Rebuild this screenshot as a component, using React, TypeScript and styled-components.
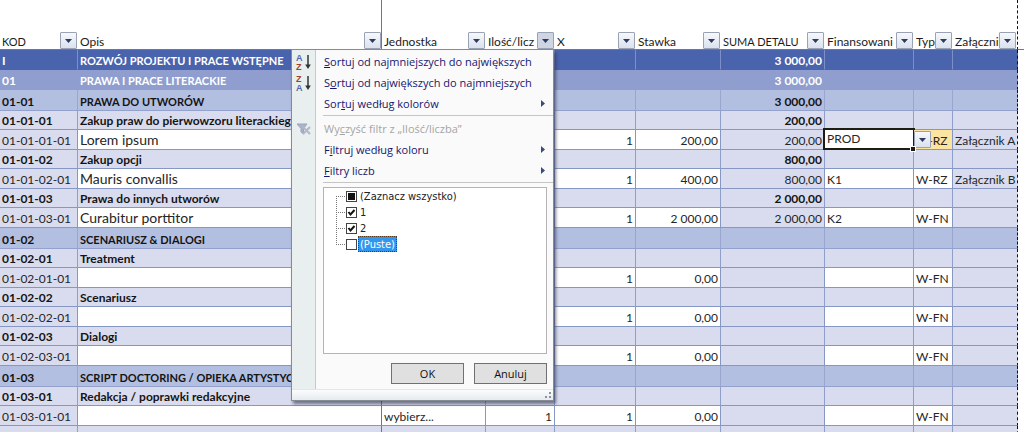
import React from "react";
import styled, { createGlobalStyle, css } from "styled-components";

const GlobalStyle = createGlobalStyle`
  * { box-sizing: border-box; }
  body { margin: 0; background: #fff; color: #1c1c1c; font: 12px/16px Lato, "Liberation Sans", sans-serif; }
  button, select, input { font: inherit; color: inherit; margin: 0; }
`;

type Level = "phase" | "stage" | "section" | "group" | "detail";

interface Entry {
  level: Level;
  code: string;
  title?: string;
  unit?: string;
  count?: string;
  times?: string;
  rate?: string;
  sum?: string;
  funding?: string;
  type?: string;
  attachment?: string;
  active?: boolean;
}

const entries: Entry[] = [
  { level: "phase", code: "I", title: "ROZWÓJ PROJEKTU I PRACE WSTĘPNE", sum: "3 000,00" },
  { level: "stage", code: "01", title: "PRAWA I PRACE LITERACKIE", sum: "3 000,00" },
  { level: "section", code: "01-01", title: "PRAWA DO UTWORÓW", sum: "3 000,00" },
  { level: "group", code: "01-01-01", title: "Zakup praw do pierwowzoru literackieg", sum: "200,00" },
  { level: "detail", code: "01-01-01-01", title: "Lorem ipsum", times: "1", rate: "200,00", sum: "200,00", funding: "PROD", type: "W-RZ", attachment: "Załącznik A", active: true },
  { level: "group", code: "01-01-02", title: "Zakup opcji", sum: "800,00" },
  { level: "detail", code: "01-01-02-01", title: "Mauris convallis", times: "1", rate: "400,00", sum: "800,00", funding: "K1", type: "W-RZ", attachment: "Załącznik B" },
  { level: "group", code: "01-01-03", title: "Prawa do innych utworów", sum: "2 000,00" },
  { level: "detail", code: "01-01-03-01", title: "Curabitur porttitor", times: "1", rate: "2 000,00", sum: "2 000,00", funding: "K2", type: "W-FN" },
  { level: "section", code: "01-02", title: "SCENARIUSZ & DIALOGI" },
  { level: "group", code: "01-02-01", title: "Treatment" },
  { level: "detail", code: "01-02-01-01", times: "1", rate: "0,00", type: "W-FN" },
  { level: "group", code: "01-02-02", title: "Scenariusz" },
  { level: "detail", code: "01-02-02-01", times: "1", rate: "0,00", type: "W-FN" },
  { level: "group", code: "01-02-03", title: "Dialogi" },
  { level: "detail", code: "01-02-03-01", times: "1", rate: "0,00", type: "W-FN" },
  { level: "section", code: "01-03", title: "SCRIPT DOCTORING / OPIEKA ARTYSTYC" },
  { level: "group", code: "01-03-01", title: "Redakcja / poprawki redakcyjne" },
  { level: "detail", code: "01-03-01-01", unit: "wybierz...", count: "1", times: "1", rate: "0,00", type: "W-FN" },
  { level: "group", code: "" },
];

const columns: { label: string; width?: number; caps?: boolean }[] = [
  { label: "KOD", width: 78, caps: true },
  { label: "Opis" },
  { label: "Jednostka", width: 104 },
  { label: "Ilość/licz", width: 69 },
  { label: "X", width: 81 },
  { label: "Stawka", width: 85 },
  { label: "SUMA DETALU", width: 104, caps: true },
  { label: "Finansowani", width: 89 },
  { label: "Typ", width: 39 },
  { label: "Załącznik", width: 65 },
];

const Sheet = styled.main`
  height: 100vh;
  overflow: hidden;
`;

const Grid = styled.table`
  width: 100%;
  table-layout: fixed;
  border-collapse: separate;
  border-spacing: 0;
`;

const HeadCell = styled.th<{ $frozen?: boolean; $pageEnd?: boolean }>`
  position: relative;
  height: 50px;
  padding: 0 1px 0 2px;
  vertical-align: bottom;
  text-align: left;
  font-size: 12px;
  font-weight: 400;
  border-bottom: 1px solid #77787c;
  ${(p) => p.$frozen && css`border-right: 1px solid #77787c; padding-right: 0;`}
  ${(p) => p.$pageEnd && css`border-right: 1px dashed #111;`}
`;

const HeadInner = styled.div`
  display: flex;
  align-items: flex-end;
`;

const HeadLabel = styled.span<{ $caps?: boolean }>`
  flex: 1;
  min-width: 0;
  overflow: hidden;
  white-space: nowrap;
  font-size: ${(p) => (p.$caps ? 11 : 12)}px;
  line-height: 15px;
`;

const DropButton = styled.button<{ $open?: boolean }>`
  flex: none;
  width: 17px;
  height: 17px;
  padding: 0;
  display: grid;
  place-items: center;
  border: 1px solid #9aa3b5;
  border-radius: 1px;
  background: ${(p) => (p.$open ? "#cfd5e2" : "linear-gradient(#f6f8fb, #dbe2ee)")};
`;

const Row = styled.tr<{ $level: Level }>`
  height: ${(p) => ({ phase: 20, stage: 20, section: 21, group: 19, detail: 20 })[p.$level]}px;
  background: ${(p) => ({ phase: "#4a63ad", stage: "#8f9ece", section: "#b3bfe1", group: "#d9dcee", detail: "#d9dcee" })[p.$level]};
  color: ${(p) => ({ phase: "#fff", stage: "#fff", section: "#141414", group: "#141414", detail: "#262626" })[p.$level]};
  font-weight: ${(p) => (p.$level === "detail" ? 400 : 700)};
  --line: ${(p) => ({ phase: "#4a63ad", stage: "#8f9ece", section: "#93a2cd", group: "#8797c4", detail: "#8797c4" })[p.$level]};
  --rule: ${(p) => ({ phase: "#7d8fc6", stage: "#8f9ece", section: "#98a6d0", group: "#8f9fca", detail: "#8797c4" })[p.$level]};
`;

const Cell = styled.td<{ $open?: boolean; $num?: boolean; $frozen?: boolean; $pageEnd?: boolean; $mark?: boolean }>`
  position: relative;
  padding: 0 2px;
  vertical-align: bottom;
  white-space: nowrap;
  font-size: 12px;
  line-height: 16px;
  text-align: ${(p) => (p.$num ? "right" : "left")};
  border-bottom: 1px solid var(--line);
  border-right: 1px solid var(--rule);
  ${(p) => p.$open && css`background: #fff;`}
  ${(p) => p.$mark && css`background: #fbe3a0;`}
  ${(p) => p.$frozen && css`border-right-color: #6f7689;`}
  ${(p) => p.$pageEnd && css`border-right: 1px dashed #111;`}
`;

const TitleCell = styled(Cell)<{ $level: Level }>`
  font-size: ${(p) => ({ phase: 11, stage: 11, section: 11, group: 12, detail: 14 })[p.$level]}px;
  line-height: ${(p) => (p.$level === "detail" ? 19 : 16)}px;
`;

const Margin = styled.td`
  padding: 0;
  background: #fff;
`;

const CellSelect = styled.select`
  position: absolute;
  inset: -2px -1px -1px -2px;
  width: 92px;
  padding: 0 2px;
  appearance: none;
  border: 2px solid #1d1d14;
  border-radius: 0;
  background: #fff;
`;

const CellDrop = styled(DropButton)`
  position: absolute;
  top: 1px;
  left: 0;
`;

const FillHandle = styled.span`
  position: absolute;
  right: -3px;
  bottom: -3px;
  width: 6px;
  height: 6px;
  border: 1px solid #fff;
  background: #1d1d14;
  z-index: 1;
`;

const Menu = styled.div`
  position: absolute;
  top: 49px;
  right: 1px;
  z-index: 5;
  width: 263px;
  border: 1px solid #868a92;
  background: #fafafa;
  box-shadow: 2px 3px 3px rgba(40, 45, 70, 0.6);
  font-family: "Open Sans", "Noto Sans", sans-serif;
  font-size: 11px;
`;

const MenuBody = styled.div`
  padding: 1px 0 5px;
  background: linear-gradient(90deg, #e9eeee 23px, #c5c9cc 23px, #c5c9cc 24px, #fafafa 24px);
`;

const MenuItem = styled.button`
  display: grid;
  grid-template-columns: 32px 1fr 12px;
  align-items: center;
  width: 100%;
  height: 21px;
  padding: 0;
  border: 0;
  background: none;
  color: #16166e;
  text-align: left;
  white-space: nowrap;
  &:disabled { color: #a5a5a5; }
`;

const IconSlot = styled.span`
  display: grid;
  padding-left: 3px;
`;

const Separator = styled.hr`
  height: 1px;
  margin: 1px 0 2px 31px;
  border: 0;
  background: #c5c5c5;
`;

const TreeBox = styled.div`
  height: 167px;
  margin: 4px 6px 0 31px;
  border: 1px solid #b4b4b4;
  background: #fff;
  font-family: "DejaVu Sans Condensed", "DejaVu Sans", sans-serif;
  font-size: 11px;
`;

const TreeRow = styled.label`
  display: flex;
  align-items: center;
  height: 16px;
  padding-left: 12px;
`;

const CheckWrap = styled.span`
  display: grid;
  margin-right: 1px;
  & > * { grid-area: 1 / 1; }
  & > svg { pointer-events: none; }
`;

const Check = styled.input`
  appearance: none;
  width: 11px;
  height: 11px;
  border: 1px solid #444;
  background: #fff;
`;

const TreeText = styled.span<{ $selected?: boolean }>`
  padding: 1px 1px 0;
  border: 1px solid transparent;
  line-height: 13px;
  color: #222;
  ${(p) => p.$selected && css`background: #3296ee; color: #fff; border: 1px dotted #5a3a18;`}
`;

const MenuButtons = styled.div`
  display: flex;
  justify-content: flex-end;
  gap: 10px;
  padding: 9px 6px 0 0;
`;

const PushButton = styled.button<{ $primary?: boolean }>`
  width: 73px;
  height: 21px;
  padding: 0;
  border: 1px solid ${(p) => (p.$primary ? "#3f7fae" : "#707070")};
  background: #e0e0e0;
  color: #111;
  font-size: 11px;
  line-height: 16px;
`;

const MenuFoot = styled.div`
  display: flex;
  justify-content: flex-end;
  align-items: flex-end;
  height: 11px;
  padding: 0 1px 1px 0;
  border-top: 1px solid #e2e6ea;
  background: linear-gradient(#fbfcfd, #e6ebf0);
`;

const DropArrow = () => (
  <svg width="7" height="4" viewBox="0 0 7 4" aria-hidden="true">
    <path d="M0 0h7L3.5 4z" fill="#2f3a60" />
  </svg>
);

const SubArrow = () => (
  <svg width="4" height="7" viewBox="0 0 4 7" aria-hidden="true">
    <path d="M0 0v7l4-3.5z" fill="#3c4a7c" />
  </svg>
);

const SortIcon = ({ top, bottom }: { top: string; bottom: string }) => (
  <svg width="18" height="18" viewBox="0 0 18 18" aria-hidden="true" fontFamily="Liberation Sans, sans-serif" fontSize="9" fontWeight="700">
    <text x="1" y="8" fill={top === "A" ? "#5068a8" : "#9a4434"}>{top}</text>
    <text x="1" y="17" fill={bottom === "A" ? "#5068a8" : "#9a4434"}>{bottom}</text>
    <path d="M13 2v11" stroke="#333" strokeWidth="1.5" />
    <path d="M10.2 11.500h5.600L13 16z" fill="#333" />
  </svg>
);

const ClearIcon = () => (
  <svg width="18" height="16" viewBox="0 0 18 16" aria-hidden="true">
    <path d="M2 3h10L8.500 7.500V13L6 11V7.500z" fill="#aab4c8" stroke="#9aa5bd" />
    <path d="M8 6l7 7M15 6l-7 7" stroke="#b0b8ca" strokeWidth="2" />
  </svg>
);

const Connector = ({ first, last }: { first?: boolean; last?: boolean }) => (
  <svg width="10" height="16" viewBox="0 0 10 16" aria-hidden="true" stroke="#777" strokeDasharray="1 1" shapeRendering="crispEdges">
    <path d={`M0.500 ${first ? 8 : 0}V${last ? 8 : 16}`} />
    <path d="M0 8.500h10" />
  </svg>
);

const options = [
  { label: "(Zaznacz wszystko)", state: "mixed" },
  { label: "1", state: "on" },
  { label: "2", state: "on" },
  { label: "(Puste)", state: "off", selected: true },
];

const FilterMenu = () => (
  <Menu>
    <MenuBody>
      <MenuItem><IconSlot><SortIcon top="A" bottom="Z" /></IconSlot><span><u>S</u>ortuj od najmniejszych do największych</span></MenuItem>
      <MenuItem><IconSlot><SortIcon top="Z" bottom="A" /></IconSlot><span>S<u>o</u>rtuj od największych do najmniejszych</span></MenuItem>
      <MenuItem><IconSlot /><span>Sor<u>t</u>uj według kolorów</span><SubArrow /></MenuItem>
      <Separator />
      <MenuItem disabled><IconSlot><ClearIcon /></IconSlot><span>Wy<u>c</u>zyść filtr z „Ilość/liczba”</span></MenuItem>
      <MenuItem><IconSlot /><span>F<u>i</u>ltruj według koloru</span><SubArrow /></MenuItem>
      <MenuItem><IconSlot /><span><u>F</u>iltry liczb</span><SubArrow /></MenuItem>
      <Separator />
      <TreeBox>
        {options.map((o, i) => (
          <TreeRow key={o.label}>
            <Connector first={i === 0} last={i === options.length - 1} />
            <CheckWrap>
              <Check type="checkbox" defaultChecked={o.state === "on"} />
              <svg width="11" height="11" viewBox="0 0 11 11" aria-hidden="true">
                {o.state === "mixed" && <rect x="2" y="2" width="7" height="7" fill="#111" />}
                {o.state === "on" && <path d="M2.500 5l2 2.500 4-4.500" fill="none" stroke="#111" strokeWidth="2" />}
              </svg>
            </CheckWrap>
            <TreeText $selected={o.selected}>{o.label}</TreeText>
          </TreeRow>
        ))}
      </TreeBox>
      <MenuButtons>
        <PushButton $primary>OK</PushButton>
        <PushButton>Anuluj</PushButton>
      </MenuButtons>
    </MenuBody>
    <MenuFoot>
      <svg width="7" height="7" viewBox="0 0 7 7" aria-hidden="true" fill="#8a929c">
        <path d="M4 0h2v2h-2zM4 4h2v2h-2zM0 4h2v2h-2z" />
      </svg>
    </MenuFoot>
  </Menu>
);

const EntryRow = ({ entry: e }: { entry: Entry }) => {
  const open = e.level === "detail";
  return (
    <Row $level={e.level}>
      <Cell>{e.code}</Cell>
      <TitleCell $level={e.level} $open={open} $frozen>{e.title}</TitleCell>
      <Cell $open={open}>{e.unit}</Cell>
      <Cell $open={open} $num>{e.count}</Cell>
      <Cell $open={open} $num>{e.times}</Cell>
      <Cell $open={open} $num>{e.rate}</Cell>
      <Cell $num>{e.sum}</Cell>
      <Cell $open={open}>
        {e.active ? (
          <>
            <CellSelect aria-label="Finansowanie" defaultValue={e.funding}>
              <option>PROD</option>
              <option>K1</option>
              <option>K2</option>
            </CellSelect>
            <FillHandle />
          </>
        ) : e.funding}
      </Cell>
      <Cell $open={open} $mark={e.active}>
        {e.type}
        {e.active && <CellDrop aria-label="Rozwiń listę"><DropArrow /></CellDrop>}
      </Cell>
      <Cell $pageEnd>{e.attachment}</Cell>
      <Margin />
    </Row>
  );
};

export default function App() {
  return (
    <Sheet>
      <GlobalStyle />
      <Grid>
        <colgroup>
          {columns.map((c) => <col key={c.label} width={c.width} />)}
          <col width={6} />
        </colgroup>
        <thead>
          <tr>
            {columns.map((c, i) => (
              <HeadCell key={c.label} $frozen={i === 1} $pageEnd={i === columns.length - 1}>
                <HeadInner>
                  <HeadLabel $caps={c.caps}>{c.label}</HeadLabel>
                  <DropButton $open={i === 3} aria-label={`Filtr: ${c.label}`}><DropArrow /></DropButton>
                </HeadInner>
                {i === 3 && <FilterMenu />}
              </HeadCell>
            ))}
            <HeadCell as="td" />
          </tr>
        </thead>
        <tbody>
          {entries.map((e, i) => <EntryRow key={i} entry={e} />)}
        </tbody>
      </Grid>
    </Sheet>
  );
}
